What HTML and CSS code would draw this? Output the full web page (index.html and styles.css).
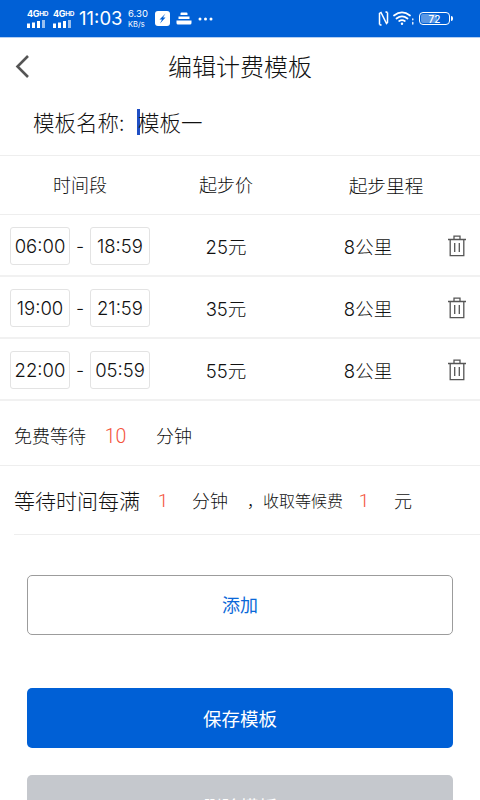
FILE: index.html
```html
<!DOCTYPE html>
<html lang="zh">
<head>
<meta charset="utf-8">
<title>编辑计费模板</title>
<link rel="stylesheet" href="styles.css">
</head>
<body>
<div class="page">
  <div class="status">
    <div class="status-left">
      <div class="sig"><span class="sig-t">4G<sup>HD</sup></span><svg width="20" height="8" viewBox="0 0 20 8"><g fill="#fff"><rect x="0" y="3.500" width="3" height="4.500"/><rect x="5" y="2.500" width="3" height="5.500"/><rect x="10" y="1" width="3" height="7"/><rect x="15" y="0" width="3" height="8" opacity=".6"/></g></svg></div>
      <div class="sig"><span class="sig-t">4G<sup>HD</sup></span><svg width="20" height="8" viewBox="0 0 20 8"><g fill="#fff"><rect x="0" y="3.500" width="3" height="4.500"/><rect x="5" y="2.500" width="3" height="5.500"/><rect x="10" y="1" width="3" height="7"/><rect x="15" y="0" width="3" height="8" opacity=".6"/></g></svg></div>
      <span class="clock">11:03</span>
      <div class="speed"><span class="kb-num">6.30</span><span class="kb">KB/s</span></div>
      <svg class="ic ic-bolt" width="15" height="15" viewBox="0 0 15 15"><rect width="15" height="15" rx="3" fill="#fff"/><path d="M10.500 2.500 4.500 8.500h2.500L5 12.500 10.500 6.500H8z" fill="#0060d6"/></svg>
      <svg class="ic ic-stack" width="16" height="13" viewBox="0 0 16 13"><path d="M4.500 1.500a1 1 0 0 1 1-1h5a1 1 0 0 1 1 1V3h-7zM2.500 4.500h11V7h-11zM.5 8.500h15v2.500a1.500 1.500 0 0 1-1.500 1.500H2A1.500 1.500 0 0 1 .5 11z" fill="#fff"/></svg>
      <svg class="ic ic-dots" width="15" height="4" viewBox="0 0 15 4"><g fill="#fff"><circle cx="2" cy="2" r="1.500"/><circle cx="7.500" cy="2" r="1.500"/><circle cx="13" cy="2" r="1.500"/></g></svg>
    </div>
    <div class="status-right">
      <svg width="11" height="15" viewBox="0 0 11 15" fill="none" stroke="#fff" stroke-width="1.500"><path d="M1.500 13.500V2.500l1.500-1 5.500 11 1-1V1.500M1.500 13.500l2 .7M9.500 1.500l-2-.7"/></svg>
      <svg width="21" height="15" viewBox="0 0 21 15" fill="none" stroke="#fff" stroke-width="1.700" stroke-linecap="round"><path d="M1 4.500C6 .5 12 .5 17 4.500M3.500 7.500c3.500-2.700 7.500-2.700 11 0M6.200 10c2-1.300 3.600-1.300 5.600 0"/><circle cx="9" cy="12.800" r="1.200" fill="#fff" stroke="none"/><path d="M19.800 8v.8M19.800 11.500v1.500" stroke-width="1.300"/></svg>
      <div class="batt"><span class="batt-fill"></span><span class="batt-num">72</span></div><span class="batt-cap"></span>
    </div>
  </div>

  <header class="nav">
    <svg class="back" width="16" height="26" viewBox="0 0 16 26" fill="none" stroke="#555" stroke-width="2.600"><path d="M15 3 4.500 13.500 15 24"/></svg>
    <h1 class="title">编辑计费模板</h1>
  </header>

  <div class="name-row">
    <span class="name-label">模板名称:</span>
    <span class="caret"></span>
    <span class="name-value">模板一</span>
  </div>

  <div class="head-row">
    <div>时间段</div>
    <div>起步价</div>
    <div class="head-dist">起步里程</div>
  </div>

  <div class="data-row">
    <div class="times"><span class="tbox">06:00</span><span class="dash">-</span><span class="tbox">18:59</span></div>
    <div class="cell">25元</div>
    <div class="cell">8公里</div>
    <div class="c-del"><svg class="trash" width="18" height="22" viewBox="0 0 18 22" fill="none" stroke="#555" stroke-width="1.300"><path d="M0 4.500h18M6 4.500V1.200h6v3.300M2.200 4.500V20.700h13.600V4.500M6.700 8v9M11.300 8v9"/></svg></div>
  </div>
  <div class="data-row">
    <div class="times"><span class="tbox">19:00</span><span class="dash">-</span><span class="tbox">21:59</span></div>
    <div class="cell">35元</div>
    <div class="cell">8公里</div>
    <div class="c-del"><svg class="trash" width="18" height="22" viewBox="0 0 18 22" fill="none" stroke="#555" stroke-width="1.300"><path d="M0 4.500h18M6 4.500V1.200h6v3.300M2.200 4.500V20.700h13.600V4.500M6.700 8v9M11.300 8v9"/></svg></div>
  </div>
  <div class="data-row">
    <div class="times"><span class="tbox">22:00</span><span class="dash">-</span><span class="tbox">05:59</span></div>
    <div class="cell">55元</div>
    <div class="cell">8公里</div>
    <div class="c-del"><svg class="trash" width="18" height="22" viewBox="0 0 18 22" fill="none" stroke="#555" stroke-width="1.300"><path d="M0 4.500h18M6 4.500V1.200h6v3.300M2.200 4.500V20.700h13.600V4.500M6.700 8v9M11.300 8v9"/></svg></div>
  </div>

  <div class="free-row">
    <span class="free-a">免费等待</span><span class="num num-free">10</span><span class="unit-free">分钟</span>
  </div>

  <div class="wait-row">
    <span class="wait-a">等待时间每满</span><span class="num num-a">1</span><span class="unit-a">分钟</span><span class="small">，收取等候费</span><span class="num num-b">1</span><span class="unit-b">元</span>
  </div>

  <div class="actions">
    <button class="btn btn-add">添加</button>
    <button class="btn btn-save">保存模板</button>
    <button class="btn btn-del">删除模板</button>
  </div>
</div>
</body>
</html>
```

FILE: styles.css
```css
* { box-sizing: border-box; }
html, body { margin: 0; height: 800px; overflow: hidden; background: #fff; }
body { font-family: "Noto Sans CJK SC", "Noto Sans", sans-serif; font-weight: 300; color: #111; }
.page { width: 480px; height: 800px; overflow: hidden; display: flex; flex-direction: column; }

.status { height: 38px; flex: none; background: #0060d6; border-bottom: 1px solid #b4cff2; color: #fff; display: flex; justify-content: space-between; align-items: center; padding: 0 27px; font-family: "Inter", sans-serif; font-weight: 400; }
.status-left, .status-right { display: flex; align-items: center; }
.sig { width: 26px; display: flex; flex-direction: column; line-height: 1; }
.sig svg { margin-top: 2px; }
.sig-t { font-size: 9px; font-weight: 700; height: 8px; line-height: 8px; white-space: nowrap; letter-spacing: -.3px; }
.sig-t sup { font-size: 6.500px; line-height: 0; vertical-align: 1px; }
.clock { font-size: 18.500px; width: 49px; line-height: 1; white-space: nowrap; }
.speed { display: flex; flex-direction: column; align-items: flex-start; width: 27px; }
.kb-num { font-size: 9.500px; line-height: 12px; }
.kb { font-size: 7.500px; line-height: 9px; }
.ic { flex: none; }
.ic-stack { margin-left: 6px; }
.ic-dots { margin-left: 6px; }
.status-right { gap: 4px; }
.batt { width: 31px; height: 13px; border: 1.500px solid #fff; border-radius: 4px; display: flex; align-items: center; justify-content: center; overflow: hidden; position: relative; font-size: 10px; font-weight: 500; margin-left: 1px; }
.batt-fill { position: absolute; left: 1px; top: 1px; bottom: 1px; width: 16px; background: rgba(255,255,255,.35); border-radius: 2px; }
.batt-num { position: relative; line-height: 1; }
.batt-cap { width: 2px; height: 5px; background: #fff; margin-left: -3px; border-radius: 0 2px 2px 0; }

.nav { height: 58px; flex: none; display: flex; align-items: center; justify-content: center; padding-bottom: 2px; position: relative; }
.back { position: absolute; left: 13px; top: 15px; }
.title { margin: 0; font-size: 24px; font-weight: 300; line-height: 1; }

.name-row { height: 60px; flex: none; display: flex; align-items: center; padding: 0 0 8px 33px; font-size: 21.500px; border-bottom: 1px solid #eee; }
.name-label { width: 104px; }
.caret { width: 3px; height: 26px; background: #1f4fc4; flex: none; margin-right: -2px; }

.head-row { height: 59px; flex: none; display: grid; grid-template-columns: 160px 132px 188px; align-items: center; text-align: center; padding-bottom: 2px; font-size: 18px; border-bottom: 1px solid #eee; }
.head-dist { font-size: 18.700px; }
.data-row { height: 62px; flex: none; display: grid; grid-template-columns: 160px 132px 152px 36px; align-items: center; text-align: center; padding-top: 2px; font-size: 18px; border-bottom: 2px solid #f1f1f1; }
.cell { font-family: "Inter", "Noto Sans CJK SC", sans-serif; font-weight: 300; font-size: 18.500px; padding-bottom: 1px; }
.times { display: flex; align-items: center; padding-left: 10px; }
.tbox { width: 60px; height: 38px; border: 1px solid #e3e3e3; border-radius: 3px; display: flex; align-items: center; justify-content: center; font-family: "Inter", sans-serif; font-weight: 300; font-size: 18.500px; }
.dash { width: 20px; font-family: "Inter", sans-serif; font-size: 18px; }
.c-del { display: flex; justify-content: flex-end; padding-right: 14px; }
.trash { display: block; }

.free-row { height: 65px; flex: none; display: flex; align-items: center; padding: 3px 0 0 14px; font-size: 18px; border-bottom: 1px solid #eee; }
.free-a { width: 73px; }
.num { font-family: "Roboto", sans-serif; font-weight: 300; color: #f4523b; text-align: center; }
.num-free { width: 57px; font-size: 19.500px; padding-top: 3px; }
.unit-free { margin-left: 12px; }
.wait-row { height: 69px; flex: none; display: flex; align-items: center; margin-left: 14px; border-bottom: 1px solid #eee; font-size: 18px; }
.wait-a { font-size: 21px; width: 126px; }
.num-a { width: 46px; font-size: 19px; }
.unit-a { width: 52px; margin-left: 6px; }
.small { font-size: 16px; width: 102px; white-space: nowrap; margin-left: 3px; }
.num-b { width: 30px; font-size: 19px; }
.unit-b { margin-left: 15px; }

.actions { display: flex; flex-direction: column; padding: 40px 27px 0; }
.btn { width: 426px; height: 60px; flex: none; border-radius: 5px; font-family: inherit; font-weight: 400; font-size: 18.500px; border: 1px solid transparent; padding: 0; }
.btn-add { background: #fff; border-color: #9c9c9c; color: #0a68d8; font-size: 18px; padding-bottom: 2px; }
.btn-save { background: #0060d6; color: #fff; margin-top: 53px; }
.btn-del { background: #c5c8cd; color: #fff; margin-top: 27px; padding-top: 2px; }
```
